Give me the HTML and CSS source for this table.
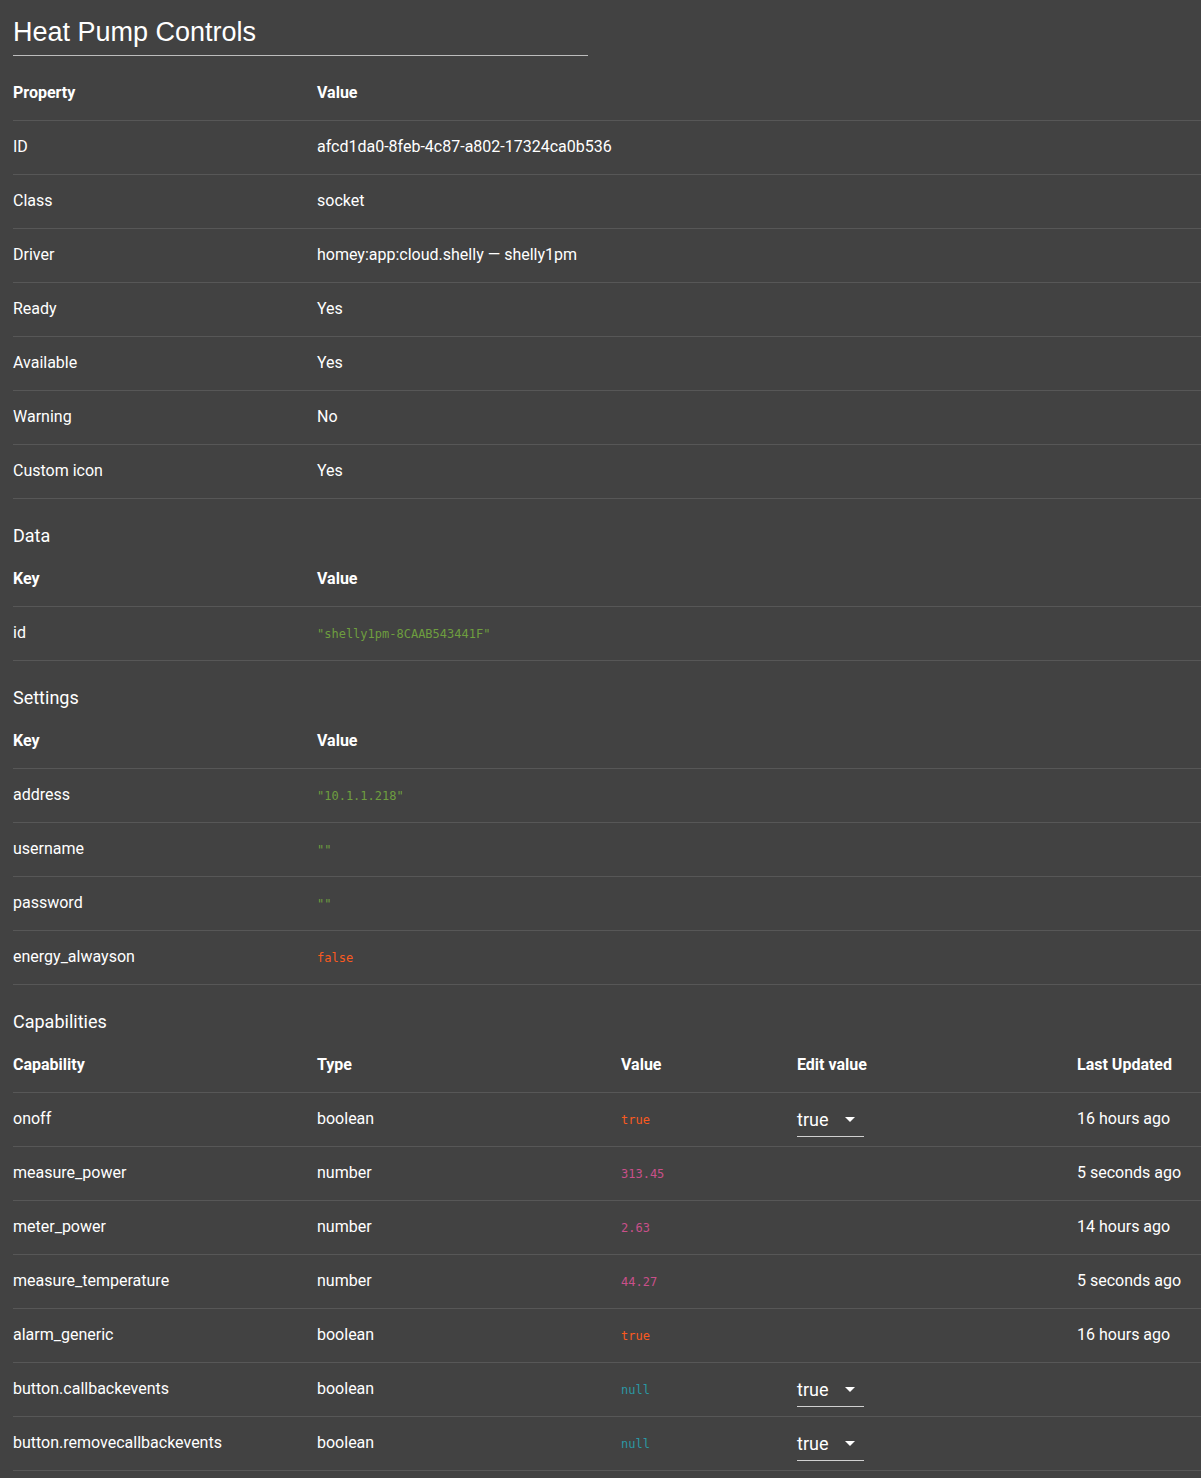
FILE: index.html
```html
<!DOCTYPE html>
<html>
<head>
<meta charset="utf-8">
<link rel="stylesheet" href="styles.css">
<title>Heat Pump Controls</title>
</head>
<body>
<h1 class="title">Heat Pump Controls</h1>

<div class="table props">
  <div class="row head"><div>Property</div><div>Value</div></div>
  <div class="row"><div>ID</div><div>afcd1da0-8feb-4c87-a802-17324ca0b536</div></div>
  <div class="row"><div>Class</div><div>socket</div></div>
  <div class="row"><div>Driver</div><div>homey:app:cloud.shelly — shelly1pm</div></div>
  <div class="row"><div>Ready</div><div>Yes</div></div>
  <div class="row"><div>Available</div><div>Yes</div></div>
  <div class="row"><div>Warning</div><div>No</div></div>
  <div class="row"><div>Custom icon</div><div>Yes</div></div>
</div>

<h2 class="section">Data</h2>
<div class="table props">
  <div class="row head"><div>Key</div><div>Value</div></div>
  <div class="row"><div>id</div><div><code class="str">"shelly1pm-8CAAB543441F"</code></div></div>
</div>

<h2 class="section">Settings</h2>
<div class="table props">
  <div class="row head"><div>Key</div><div>Value</div></div>
  <div class="row"><div>address</div><div><code class="str">"10.1.1.218"</code></div></div>
  <div class="row"><div>username</div><div><code class="str">""</code></div></div>
  <div class="row"><div>password</div><div><code class="str">""</code></div></div>
  <div class="row"><div>energy_alwayson</div><div><code class="bool">false</code></div></div>
</div>

<h2 class="section">Capabilities</h2>
<div class="table caps">
  <div class="row head"><div>Capability</div><div>Type</div><div>Value</div><div>Edit value</div><div>Last Updated</div></div>
  <div class="row"><div>onoff</div><div>boolean</div><div><code class="bool">true</code></div><div><span class="select"><span>true</span><span class="arrow"></span></span></div><div>16 hours ago</div></div>
  <div class="row"><div>measure_power</div><div>number</div><div><code class="num">313.45</code></div><div></div><div>5 seconds ago</div></div>
  <div class="row"><div>meter_power</div><div>number</div><div><code class="num">2.63</code></div><div></div><div>14 hours ago</div></div>
  <div class="row"><div>measure_temperature</div><div>number</div><div><code class="num">44.27</code></div><div></div><div>5 seconds ago</div></div>
  <div class="row"><div>alarm_generic</div><div>boolean</div><div><code class="bool">true</code></div><div></div><div>16 hours ago</div></div>
  <div class="row"><div>button.callbackevents</div><div>boolean</div><div><code class="null">null</code></div><div><span class="select"><span>true</span><span class="arrow"></span></span></div><div></div></div>
  <div class="row"><div>button.removecallbackevents</div><div>boolean</div><div><code class="null">null</code></div><div><span class="select"><span>true</span><span class="arrow"></span></span></div><div></div></div>
</div>
</body>
</html>
```
FILE: styles.css
```css
html, body {
  margin: 0;
  background: #424242;
}
body {
  padding: 0 0 0 13px;
  color: #ffffff;
  font-family: Roboto, "Noto Sans", sans-serif;
  font-size: 16px;
}
.title {
  width: 575px;
  margin: 0 0 11px 0;
  padding: 17px 0 7px 0;
  font-family: "Liberation Sans", Arial, sans-serif;
  font-weight: 400;
  font-size: 27px;
  line-height: 31px;
  border-bottom: 1px solid #bdbdbd;
}
.section {
  margin: 0;
  height: 54px;
  box-sizing: border-box;
  padding-top: 25px;
  font-size: 18px;
  font-weight: 400;
  line-height: 24px;
}
.table {
  width: 1188px;
}
.row {
  display: grid;
  height: 54px;
  box-sizing: border-box;
  padding-bottom: 2px;
  border-bottom: 1px solid #575757;
  align-items: center;
}
.props .row {
  grid-template-columns: 304px 1fr;
}
.caps .row {
  grid-template-columns: 304px 304px 176px 280px 124px;
}
.row > div {
  white-space: nowrap;
}
.head {
  font-weight: 700;
}
code {
  font-family: "DejaVu Sans Mono", "Liberation Mono", monospace;
  font-size: 12px;
}
.str { color: #6e9e3f; }
.bool { color: #fa5a1f; }
.num { color: #c9508a; }
.null { color: #2b98a4; }
.select {
  display: inline-flex;
  align-items: center;
  width: 67px;
  height: 32px;
  box-sizing: border-box;
  margin-top: 5px;
  padding-bottom: 2px;
  border-bottom: 1px solid #d0d0d0;
  font-size: 18px;
}
.arrow {
  width: 0;
  height: 0;
  margin-left: 17px;
  border-left: 5px solid transparent;
  border-right: 5px solid transparent;
  border-top: 5px solid #ffffff;
}
```
